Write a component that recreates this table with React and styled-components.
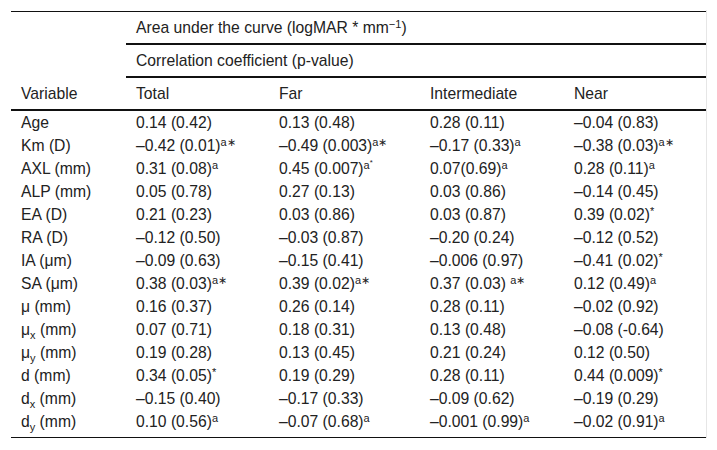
import React from 'react';
import styled, { createGlobalStyle } from 'styled-components';

const GlobalStyle = createGlobalStyle`
  body {
    margin: 0;
    background: #ffffff;
    font-family: "Liberation Sans", Arial, sans-serif;
  }
`;

const Page = styled.div`
  padding: 10px 0 0 11px;
`;

const TableWrap = styled.div`
  width: 695px;
  padding-top: 1px;
  border-right: 1px solid #e6e6e6;
`;

const Table = styled.table`
  width: 695px;
  border-collapse: separate;
  border-spacing: 0;
  table-layout: fixed;
  border-top: 1px solid #111;
  border-bottom: 1px solid #111;
  font-size: 15.7px;
  color: #222;
`;

const HeadCell = styled.th`
  text-align: left;
  font-weight: 400;
  padding: 6px 10px;
  line-height: 19px;
  vertical-align: ${p => (p.$bottom ? 'bottom' : 'middle')};
  border-bottom: ${p => (p.$line ? '2px solid #111' : 'none')};
  white-space: nowrap;
`;

const Cell = styled.td`
  padding: 2px 10px ${p => (p.$last ? '6px' : '2px')};
  line-height: 19px;
  white-space: nowrap;
`;

const Sup = styled.sup`
  font-size: 70%;
  line-height: 0;
  vertical-align: ${p => (p.$high ? '0.55em' : '0.45em')};
`;

const Sub = styled.sub`
  font-size: 70%;
  line-height: 0;
  vertical-align: -0.35em;
`;

// sup codes: 'a' plain, 'as' a + low star, 'ah' a + raised star, 's' raised star
const Mark = ({ m }) => {
  if (!m) return null;
  if (m === 'a') return <Sup>a</Sup>;
  if (m === 'as') return <Sup>a∗</Sup>;
  if (m === 'ah') return <Sup>a<Sup $high>*</Sup></Sup>;
  if (m === 's') return <Sup>*</Sup>;
  return null;
};

const Value = ({ v }) => {
  const [text, m] = Array.isArray(v) ? v : [v];
  return (
    <>
      {text}
      <Mark m={m} />
    </>
  );
};

const rows = [
  { name: 'Age', vals: ['0.14 (0.42)', '0.13 (0.48)', '0.28 (0.11)', '–0.04 (0.83)'] },
  { name: 'Km (D)', vals: [['–0.42 (0.01)', 'as'], ['–0.49 (0.003)', 'as'], ['–0.17 (0.33)', 'a'], ['–0.38 (0.03)', 'as']] },
  { name: 'AXL (mm)', vals: [['0.31 (0.08)', 'a'], ['0.45 (0.007)', 'ah'], ['0.07(0.69)', 'a'], ['0.28 (0.11)', 'a']] },
  { name: 'ALP (mm)', vals: ['0.05 (0.78)', '0.27 (0.13)', '0.03 (0.86)', '–0.14 (0.45)'] },
  { name: 'EA (D)', vals: ['0.21 (0.23)', '0.03 (0.86)', '0.03 (0.87)', ['0.39 (0.02)', 's']] },
  { name: 'RA (D)', vals: ['–0.12 (0.50)', '–0.03 (0.87)', '–0.20 (0.24)', '–0.12 (0.52)'] },
  { name: 'IA (μm)', vals: ['–0.09 (0.63)', '–0.15 (0.41)', '–0.006 (0.97)', ['–0.41 (0.02)', 's']] },
  { name: 'SA (μm)', vals: [['0.38 (0.03)', 'as'], ['0.39 (0.02)', 'as'], ['0.37 (0.03) ', 'as'], ['0.12 (0.49)', 'a']] },
  { name: 'μ (mm)', vals: ['0.16 (0.37)', '0.26 (0.14)', '0.28 (0.11)', '–0.02 (0.92)'] },
  { name: 'μ', sub: 'x', vals: ['0.07 (0.71)', '0.18 (0.31)', '0.13 (0.48)', '–0.08 (-0.64)'] },
  { name: 'μ', sub: 'y', vals: ['0.19 (0.28)', '0.13 (0.45)', '0.21 (0.24)', '0.12 (0.50)'] },
  { name: 'd (mm)', vals: [['0.34 (0.05)', 's'], '0.19 (0.29)', '0.28 (0.11)', ['0.44 (0.009)', 's']] },
  { name: 'd', sub: 'x', vals: ['–0.15 (0.40)', '–0.17 (0.33)', '–0.09 (0.62)', '–0.19 (0.29)'] },
  { name: 'd', sub: 'y', vals: [['0.10 (0.56)', 'a'], ['–0.07 (0.68)', 'a'], ['–0.001 (0.99)', 'a'], ['–0.02 (0.91)', 'a']] },
];

const App = () => (
  <Page>
    <GlobalStyle />
    <TableWrap>
      <Table>
        <colgroup>
          <col style={{ width: 115 }} />
          <col style={{ width: 143 }} />
          <col style={{ width: 151 }} />
          <col style={{ width: 144 }} />
          <col style={{ width: 142 }} />
        </colgroup>
        <thead>
          <tr>
            <HeadCell rowSpan={3} $bottom $line>Variable</HeadCell>
            <HeadCell colSpan={4} $line>
              Area under the curve (logMAR * mm<Sup>−1</Sup>)
            </HeadCell>
          </tr>
          <tr>
            <HeadCell colSpan={4} $line>Correlation coefficient (p-value)</HeadCell>
          </tr>
          <tr>
            <HeadCell $line>Total</HeadCell>
            <HeadCell $line>Far</HeadCell>
            <HeadCell $line>Intermediate</HeadCell>
            <HeadCell $line>Near</HeadCell>
          </tr>
        </thead>
        <tbody>
          {rows.map((r, i) => {
            const last = i === rows.length - 1;
            return (
              <tr key={i}>
                <Cell $last={last}>
                  {r.sub ? (
                    <>
                      {r.name}
                      <Sub>{r.sub}</Sub> (mm)
                    </>
                  ) : (
                    r.name
                  )}
                </Cell>
                {r.vals.map((v, j) => (
                  <Cell key={j} $last={last}>
                    <Value v={v} />
                  </Cell>
                ))}
              </tr>
            );
          })}
        </tbody>
      </Table>
    </TableWrap>
  </Page>
);

export default App;
